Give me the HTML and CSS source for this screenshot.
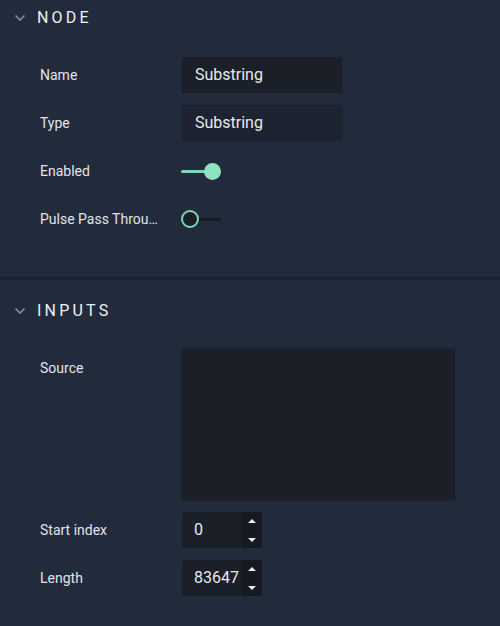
FILE: index.html
```html
<!DOCTYPE html>
<html>
<head>
<meta charset="utf-8">
<link rel="stylesheet" href="styles.css">
</head>
<body>
<div class="panel">
  <section class="section first">
    <div class="header">
      <svg class="chev" width="12" height="8" viewBox="0 0 12 8"><path d="M1.5 1.5 L6 6 L10.5 1.5" fill="none" stroke="#858d9a" stroke-width="1.6"/></svg>
      <span class="title">NODE</span>
    </div>
    <div class="rows">
      <div class="row">
        <span class="label">Name</span>
        <div class="input">Substring</div>
      </div>
      <div class="row">
        <span class="label">Type</span>
        <div class="input readonly">Substring</div>
      </div>
      <div class="row">
        <span class="label">Enabled</span>
        <div class="toggle on"><span class="track"></span><span class="knob"></span></div>
      </div>
      <div class="row">
        <span class="label">Pulse Pass Throu…</span>
        <div class="toggle off"><span class="knob"></span><span class="track"></span></div>
      </div>
    </div>
  </section>
  <section class="section second">
    <div class="header">
      <svg class="chev" width="12" height="8" viewBox="0 0 12 8"><path d="M1.5 1.5 L6 6 L10.5 1.5" fill="none" stroke="#858d9a" stroke-width="1.6"/></svg>
      <span class="title">INPUTS</span>
    </div>
    <div class="rows">
      <div class="row top">
        <span class="label">Source</span>
        <div class="textarea"></div>
      </div>
      <div class="row">
        <span class="label">Start index</span>
        <div class="number"><span class="num-val">0</span><span class="spin"><span class="up"></span><span class="down"></span></span></div>
      </div>
      <div class="row">
        <span class="label">Length</span>
        <div class="number"><span class="num-val">83647</span><span class="spin"><span class="up"></span><span class="down"></span></span></div>
      </div>
    </div>
  </section>
</div>
</body>
</html>
```
FILE: styles.css
```css
html, body {
  margin: 0;
  padding: 0;
  background: #222b3b;
  font-family: Roboto, "Liberation Sans", sans-serif;
}
.panel {
  width: 500px;
  height: 626px;
  overflow: hidden;
}
.section {
  padding-bottom: 40px;
}
.section.second {
  border-top: 3px solid #1b2230;
  padding-top: 13px;
  padding-bottom: 0;
}
.header {
  height: 34px;
  display: flex;
  align-items: center;
  padding-left: 14px;
}
.chev {
  margin-right: 11px;
  margin-top: 1px;
}
.title {
  font-size: 16px;
  font-weight: 400;
  letter-spacing: 3.2px;
  color: #eef1f5;
}
.rows {
  padding-top: 22px;
  display: flex;
  flex-direction: column;
  gap: 12px;
  padding-left: 40px;
}
.section.first .rows {
  padding-top: 23px;
}
.row {
  display: flex;
  align-items: center;
  min-height: 36px;
}
.row.top {
  align-items: flex-start;
}
.row.top .label {
  line-height: 36px;
  margin-top: 1px;
}
.label {
  width: 119px;
  margin-right: 22px;
  font-size: 14px;
  color: #e0e4ea;
  white-space: nowrap;
}
.input {
  margin-left: 1px;
  width: 147px;
  height: 36px;
  padding-left: 13px;
  box-sizing: content-box;
  background: #1a1f28;
  border-radius: 2px;
  color: #e8eaee;
  font-size: 16px;
  line-height: 36px;
  box-shadow: 0 0 1px rgba(0,0,0,0.4);
}
.input.readonly {
  background: #1d2330;
}
.toggle {
  position: relative;
  width: 42px;
  height: 18px;
  display: flex;
  align-items: center;
}
.toggle.on .track {
  width: 32px;
  height: 3px;
  background: #7fd6b2;
  border-radius: 2px;
}
.toggle.on .knob {
  width: 17px;
  height: 17px;
  border-radius: 50%;
  background: #8fe2c0;
  margin-left: -9px;
}
.toggle.off .knob {
  width: 14px;
  height: 14px;
  border-radius: 50%;
  border: 2px solid #7fd6b2;
  background: #1a1f28;
  position: relative;
  z-index: 1;
}
.toggle.off .track {
  width: 26px;
  height: 3px;
  background: #161b23;
  margin-left: -4px;
  border-radius: 2px;
}
.textarea {
  margin-left: 1px;
  width: 273px;
  height: 151px;
  background: #1a1f28;
  border-radius: 2px;
  box-shadow: 0 0 2px rgba(0,0,0,0.45);
}
.number {
  margin-left: 1px;
  width: 80px;
  height: 36px;
  display: flex;
  background: #1a1f28;
  border-radius: 2px;
  overflow: hidden;
}
.num-val {
  flex: 1;
  padding-left: 12px;
  color: #e8eaee;
  font-size: 16px;
  line-height: 36px;
  overflow: hidden;
  white-space: nowrap;
}
.spin {
  width: 20px;
  background: #151a22;
  display: flex;
  flex-direction: column;
  align-items: center;
  justify-content: space-between;
  padding: 7px 0 6px;
  box-sizing: border-box;
}
.spin .up {
  width: 0;
  height: 0;
  border-left: 4px solid transparent;
  border-right: 4px solid transparent;
  border-bottom: 4px solid #e8eaee;
}
.spin .down {
  width: 0;
  height: 0;
  border-left: 4px solid transparent;
  border-right: 4px solid transparent;
  border-top: 4px solid #e8eaee;
}
```
